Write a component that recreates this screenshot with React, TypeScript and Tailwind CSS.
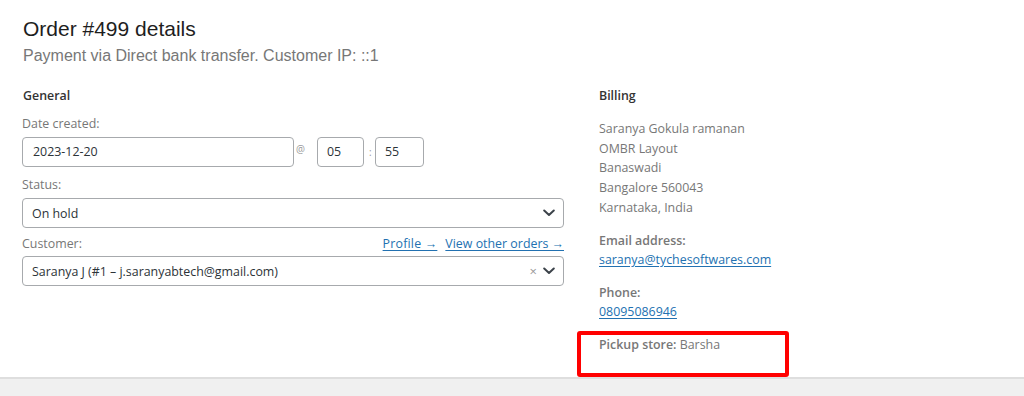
import React from "react";

const Chevron = () => (
  <svg width="12" height="8" viewBox="0 0 12 8" className="shrink-0">
    <polyline points="1.2,1.5 6,6 10.8,1.5" fill="none" stroke="#3c434a" strokeWidth="2" strokeLinecap="round" strokeLinejoin="round" />
  </svg>
);

export default function App() {
  const body = "font-['Open_Sans',sans-serif] text-[12.4px] leading-[19.5px]";
  return (
    <div className="w-[1024px] h-[396px] bg-[#f0f0f0] overflow-hidden relative">
      <div className="bg-white h-[377px] border-b-2 border-[#dedede] box-content">
        <div className="pl-[23px] pt-[15px] font-['Liberation_Sans',Arial,sans-serif]">
          <h2 className="text-[21px] leading-[28px] text-[#1e1e1e] font-normal">Order #499 details</h2>
          <p className="mt-[1px] text-[16px] leading-[24px] text-[#777777]">
            Payment via Direct bank transfer. Customer IP: ::1
          </p>
        </div>
        <div className={`flex pl-[22px] mt-[18px] ${body}`}>
          {/* General column */}
          <div className="w-[542px] flex flex-col">
            <h3 className="h-[20px] font-semibold text-[#333333] pl-[1px]">General</h3>
            <div className="mt-[8px] h-[20px] text-[#777777]">Date created:</div>
            <div className="mt-[3px] flex items-start h-[30px]">
              <div className="w-[272px] h-[30px] border border-[#a7aaad] rounded-[4px] flex items-center px-[10px] text-[#2c3338]">
                2023-12-20
              </div>
              <span className="w-[23px] text-[10px] leading-[12px] pt-[6px] pl-[2px] text-[#999999]">@</span>
              <div className="w-[47px] h-[30px] border border-[#a7aaad] rounded-[4px] flex items-center px-[9px] text-[#2c3338]">
                05
              </div>
              <span className="w-[11px] text-[10px] leading-[12px] pt-[9px] pl-[5px] text-[#999999]">:</span>
              <div className="w-[49px] h-[30px] border border-[#a7aaad] rounded-[4px] flex items-center px-[9px] text-[#2c3338]">
                55
              </div>
            </div>
            <div className="mt-[8px] h-[20px] text-[#777777]">Status:</div>
            <div className="mt-[3px] h-[30px] border border-[#a7aaad] rounded-[4px] flex items-center justify-between pl-[9px] pr-[8px] text-[#2c3338]">
              <span className="pt-[2px]">On hold</span>
              <Chevron />
            </div>
            <div className="mt-[6px] h-[20px] flex justify-between text-[#777777]">
              <span>Customer:</span>
              <span className="flex gap-[8px]">
                <a className="text-[#2271b1] underline underline-offset-[2px] tracking-[0.2px]">Profile →</a>
                <a className="text-[#2271b1] underline underline-offset-[2px]">View other orders →</a>
              </span>
            </div>
            <div className="mt-[2px] h-[30px] border border-[#a7aaad] rounded-[4px] flex items-center justify-between pl-[9px] pr-[8px] text-[#2c3338]">
              <span className="pt-[1px]">Saranya J (#1 – j.saranyabtech@gmail.com)</span>
              <span className="flex items-center gap-[6px]">
                <span className="text-[#999999] text-[13px] leading-none">×</span>
                <Chevron />
              </span>
            </div>
          </div>
          {/* Billing column */}
          <div className="ml-[35px] flex flex-col text-[#777777]">
            <h3 className="h-[20px] font-semibold text-[#333333]">Billing</h3>
            <div className="mt-[13px] flex flex-col leading-[19.7px]">
              <span>Saranya Gokula ramanan</span>
              <span>OMBR Layout</span>
              <span>Banaswadi</span>
              <span>Bangalore 560043</span>
              <span>Karnataka, India</span>
            </div>
            <p className="mt-[13px]">
              <strong className="font-semibold block">Email address:</strong>
              <a className="text-[#2271b1] underline underline-offset-[2px]">saranya@tychesoftwares.com</a>
            </p>
            <p className="mt-[13px]">
              <strong className="font-semibold block">Phone:</strong>
              <a className="text-[#2271b1] underline underline-offset-[2px]">08095086946</a>
            </p>
            <p className="mt-[13px]">
              <strong className="font-semibold">Pickup store:</strong> Barsha
            </p>
          </div>
        </div>
      </div>
      <div className="absolute left-[577px] top-[331px] w-[212px] h-[46px] border-[4px] border-[#ff0000] rounded-[3px]" />
    </div>
  );
}
